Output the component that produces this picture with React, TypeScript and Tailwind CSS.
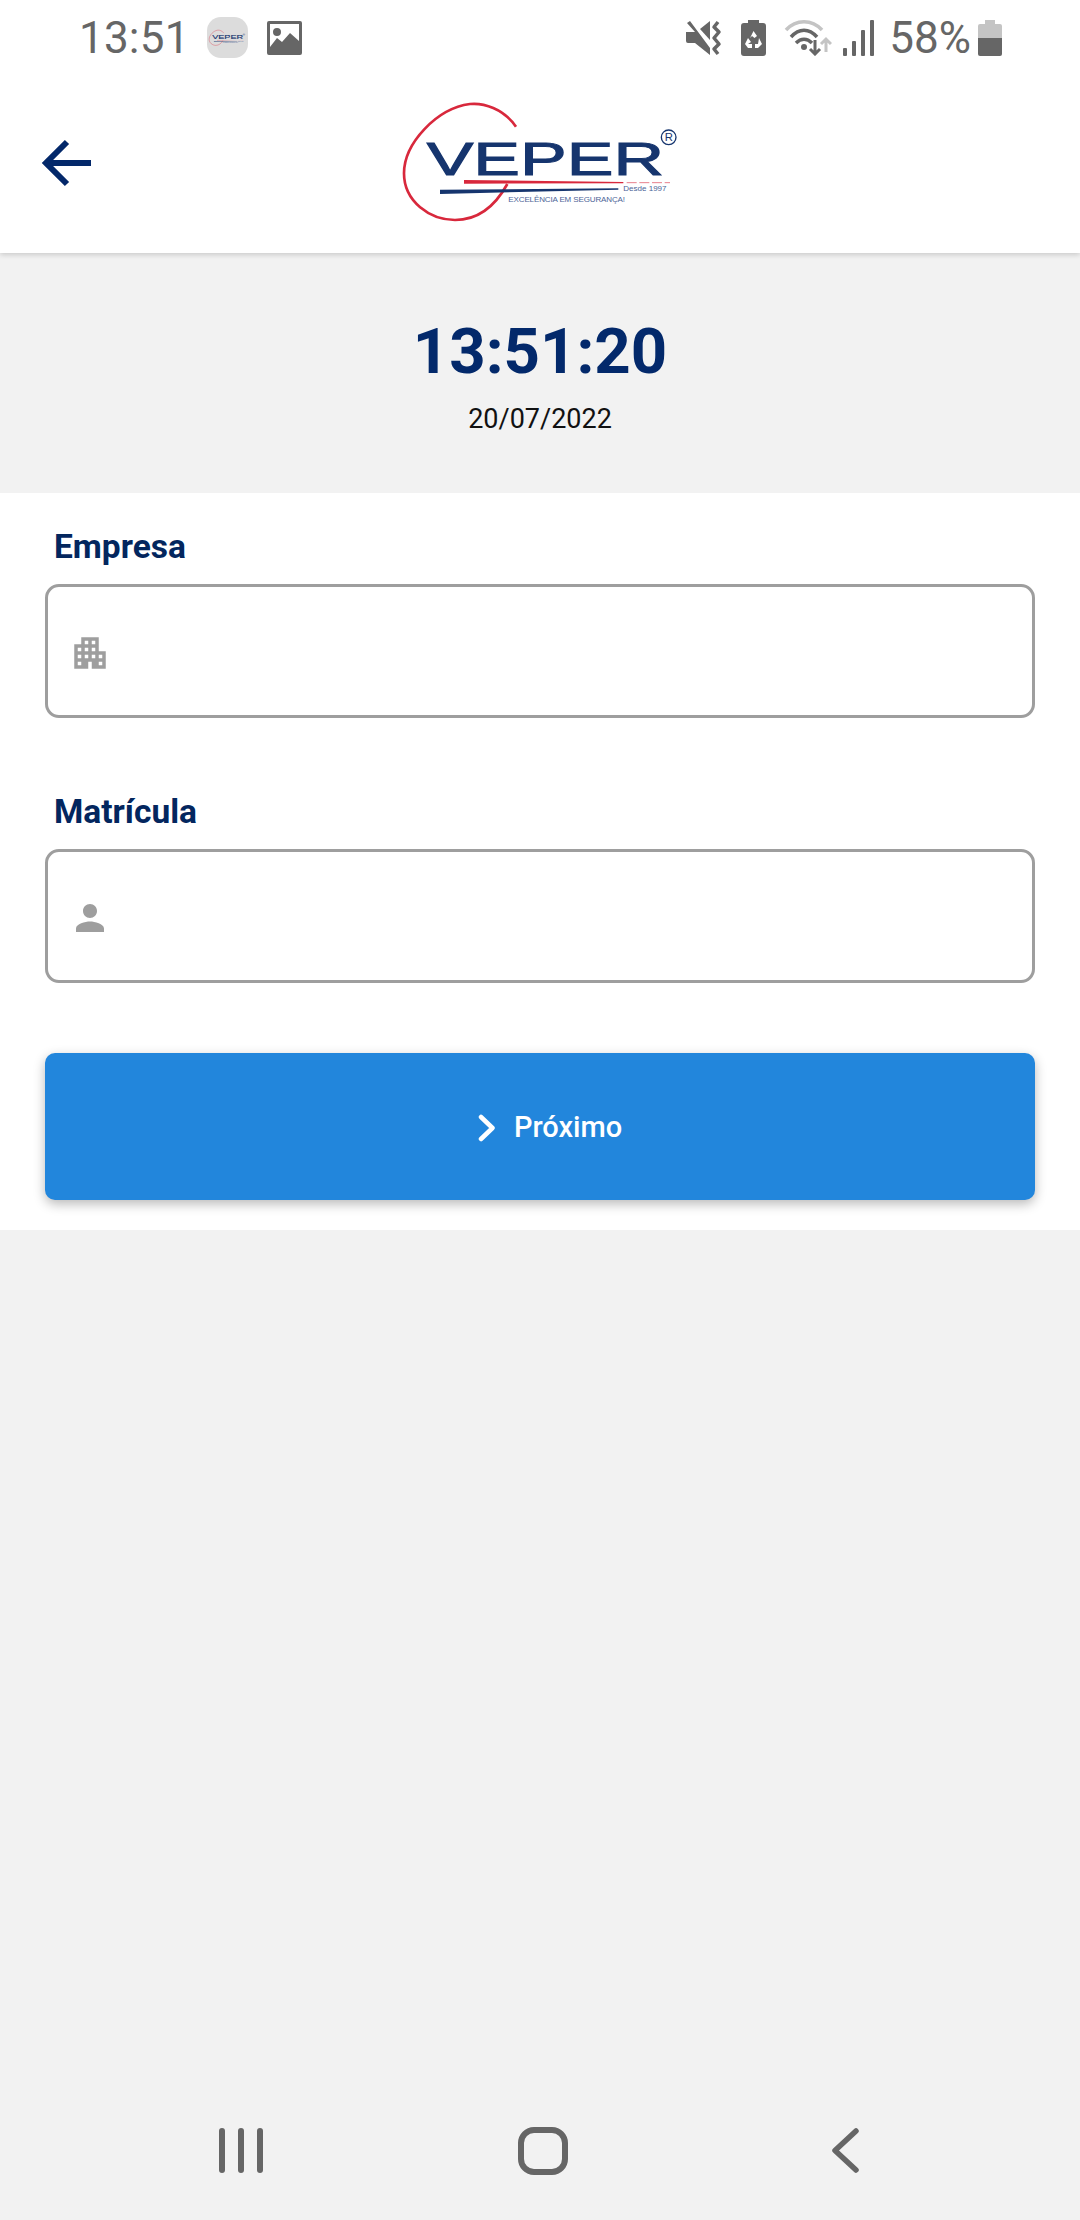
import React from "react";

const Logo: React.FC<{ className?: string }> = ({ className = "" }) => (
  <svg className={className} viewBox="0 0 960 480" fill="none">
    {/* red swoosh */}
    <path
      d="M408 140C370 85 310 68 270 72C170 85 72 190 72 280C72 365 150 420 225 420C300 420 350 370 382 312"
      stroke="#d8283c"
      strokeWidth="8"
    />
    <text
      x="140"
      y="285"
      textLength="712"
      lengthAdjust="spacingAndGlyphs"
      fontFamily="Liberation Sans, sans-serif"
      fontSize="138"
      fill="#16356e"
      stroke="#16356e"
      strokeWidth="3"
    >
      VEPER
    </text>
    <path d="M252 300L730 306V310L252 311Z" fill="#d8283c" />
    <path d="M740 308H870" stroke="#e8808c" strokeWidth="3" strokeDasharray="30 8" />
    <path d="M180 329L715 325V329L180 342Z" fill="#16356e" />
    <text x="730" y="334" fontFamily="Liberation Sans, sans-serif" fontSize="24" fill="#4c6497">
      Desde 1997
    </text>
    <text
      x="385"
      y="366"
      textLength="350"
      fontFamily="Liberation Sans, sans-serif"
      fontSize="24"
      fill="#4c6497"
    >
      EXCELÊNCIA EM SEGURANÇA!
    </text>
    <circle cx="866" cy="172" r="22" stroke="#16356e" strokeWidth="4" />
    <text x="854" y="184" fontFamily="Liberation Sans, sans-serif" fontSize="34" fill="#16356e">
      R
    </text>
  </svg>
);

const StatusBar = () => (
  <div className="flex h-[78px] items-center pl-[79px] pr-[78px] pb-[3px] text-[#666666]">
    <span className="text-[44px] leading-none tracking-[0.2px]">13:51</span>
    <div className="ml-[17px] flex h-[41px] w-[41px] items-center justify-center rounded-[14px] bg-[#dcdcdc]">
      <Logo className="w-[42px] shrink-0" />
    </div>
    <svg className="ml-[19px] h-[34px] w-[35px]" viewBox="0 0 35 34">
      <path
        fillRule="evenodd"
        fill="#666666"
        d="M2 0H33A2 2 0 0 1 35 2V32A2 2 0 0 1 33 34H2A2 2 0 0 1 0 32V2A2 2 0 0 1 2 0ZM3 3V26L10 17L15 21L23 12L32 20V3ZM10 7A4 4 0 1 1 10 15A4 4 0 1 1 10 7Z"
      />
    </svg>

    <div className="ml-auto flex items-center">
      {/* mute + vibrate */}
      <svg className="h-[36px] w-[37px]" viewBox="0 0 37 36" fill="#666666">
        <path d="M0 12H9L1 3L4 1L24 28V35L9 23H2A2 2 0 0 1 0 21Z" />
        <path d="M14 9L24 1V20Z" />
        <path
          d="M32 2L28 7L33 12L28 18L33 24L28 29L32 34"
          fill="none"
          stroke="#666666"
          strokeWidth="3.5"
          strokeLinejoin="round"
        />
      </svg>
      {/* battery saver */}
      <svg className="ml-[18px] h-[36px] w-[25px]" viewBox="0 0 25 36">
        <path
          fill="#666666"
          d="M7 0H18V3H22A3 3 0 0 1 25 6V33A3 3 0 0 1 22 36H3A3 3 0 0 1 0 33V6A3 3 0 0 1 3 3H7Z"
        />
        <path
          fill="#ffffff"
          d="M12.5 11L16 16L13.5 18L11 16L9 18ZM18 18L21 24L17 28H14V24H17ZM7 18L10 22L7 24H11V28H7L4 24Z"
        />
      </svg>
      {/* wifi with data arrows */}
      <svg className="ml-[18px] h-[36px] w-[48px]" viewBox="0 0 48 36" fill="none">
        <path d="M2 10C12 -1 28 -1 38 10" stroke="#c4c4c4" strokeWidth="3.5" />
        <path d="M7 17C15 8 25 8 33 17" stroke="#666666" strokeWidth="3.5" />
        <path d="M12 23C17 18 23 18 28 23" stroke="#666666" strokeWidth="3.5" />
        <circle cx="20" cy="27" r="3" fill="#666666" />
        <path d="M31 20V34M26 29L31 34L36 29" stroke="#666666" strokeWidth="3" />
        <path d="M42 32V19M37 24L42 19L47 24" stroke="#c4c4c4" strokeWidth="3" />
      </svg>
      {/* signal */}
      <svg className="ml-[11px] h-[36px] w-[32px]" viewBox="0 0 32 36" fill="#666666">
        <rect x="0" y="28" width="4" height="8" rx="1" />
        <rect x="9" y="21" width="4" height="15" rx="1" />
        <rect x="18" y="10" width="4" height="26" rx="1" />
        <rect x="27" y="0" width="4" height="36" rx="1" />
      </svg>
      <span className="ml-[14px] text-[44px] leading-none">58%</span>
      {/* battery level */}
      <svg className="ml-[7px] h-[36px] w-[24px]" viewBox="0 0 24 36">
        <path fill="#c4c4c4" d="M7 0H17V4H22A2 2 0 0 1 24 6V18H0V6A2 2 0 0 1 2 4H7Z" />
        <path fill="#666666" d="M0 18H24V34A2 2 0 0 1 22 36H2A2 2 0 0 1 0 34Z" />
      </svg>
    </div>
  </div>
);

interface FieldProps {
  label: string;
  iconPath: string;
  className?: string;
}

const Field: React.FC<FieldProps> = ({ label, iconPath, className = "" }) => (
  <div className={className}>
    <label className="block h-[40px] pl-[9px] text-[33.5px] font-bold leading-[40px] text-[#03265e]">
      {label}
    </label>
    <div className="mt-[17px] flex h-[134px] items-center rounded-[14px] border-[3px] border-[#9e9e9e] bg-white pl-[21px]">
      <svg className="mt-[3px] h-[42px] w-[42px]" viewBox="0 0 24 24" fill="#9e9e9e">
        <path d={iconPath} />
      </svg>
    </div>
  </div>
);

export default function App() {
  return (
    <div className="flex h-[2220px] flex-col bg-[#f2f2f2] font-['Roboto',sans-serif]">
      <header className="relative z-10 h-[253px] bg-white shadow-[0_2px_5px_rgba(0,0,0,0.16)]">
        <StatusBar />
        <div className="grid h-[170px] grid-cols-[1fr_auto_1fr] items-center">
          <svg className="ml-[41px] h-[52px] w-[52px]" viewBox="0 0 52 52" fill="none">
            <path d="M50 26H7M26 5L5 26L26 47" stroke="#03286a" strokeWidth="6" />
          </svg>
          <Logo className="mb-[6px] h-[160px] w-[320px]" />
        </div>
      </header>

      <section className="flex h-[240px] flex-col items-center">
        <h1 className="mt-[61px] text-[63.5px] font-bold leading-[76px] text-[#03296b]">13:51:20</h1>
        <p className="mt-[13px] text-[27px] leading-[32px] text-[#111111]">20/07/2022</p>
      </section>

      <section className="bg-white px-[45px] pt-[34px] pb-[30px]">
        <Field
          label="Empresa"
          iconPath="M17 11V3H7v4H3v14h8v-4h2v4h8V11h-4zM7 19H5v-2h2v2zm0-4H5v-2h2v2zm0-4H5V9h2v2zm4 4H9v-2h2v2zm0-4H9V9h2v2zm0-4H9V5h2v2zm4 8h-2v-2h2v2zm0-4h-2V9h2v2zm0-4h-2V5h2v2zm4 12h-2v-2h2v2zm0-4h-2v-2h2v2z"
        />
        <Field
          label="Matrícula"
          className="mt-[74px]"
          iconPath="M12 12c2.21 0 4-1.79 4-4s-1.79-4-4-4-4 1.79-4 4 1.79 4 4 4zm0 2c-2.67 0-8 1.34-8 4v2h16v-2c0-2.66-5.33-4-8-4z"
        />
        <button className="mt-[70px] flex h-[147px] w-full items-center justify-center gap-[18px] rounded-[10px] bg-[#2286dc] pl-[20px] pt-[2px] text-[29px] font-medium text-white shadow-[0_4px_12px_rgba(0,0,0,0.28)]">
          <svg className="h-[28px] w-[18px]" viewBox="0 0 18 28" fill="none">
            <path
              d="M3 3L14.5 14L3 25"
              stroke="#ffffff"
              strokeWidth="4.5"
              strokeLinecap="round"
              strokeLinejoin="round"
            />
          </svg>
          Próximo
        </button>
      </section>

      <div className="flex-1" />

      <nav className="flex h-[92px] items-start pl-[219px]">
        <div className="flex gap-[13px]">
          <span className="h-[45px] w-[6px] rounded-full bg-[#666666]" />
          <span className="h-[45px] w-[6px] rounded-full bg-[#666666]" />
          <span className="h-[45px] w-[6px] rounded-full bg-[#666666]" />
        </div>
        <div className="-mt-[1px] ml-[255px] h-[48px] w-[50px] rounded-[16px] border-[6px] border-[#666666]" />
        <svg className="ml-[263px] h-[45px] w-[28px]" viewBox="0 0 28 45" fill="none">
          <path
            d="M25 3L4 22.5L25 42"
            stroke="#666666"
            strokeWidth="5.5"
            strokeLinecap="round"
            strokeLinejoin="round"
          />
        </svg>
      </nav>
    </div>
  );
}
